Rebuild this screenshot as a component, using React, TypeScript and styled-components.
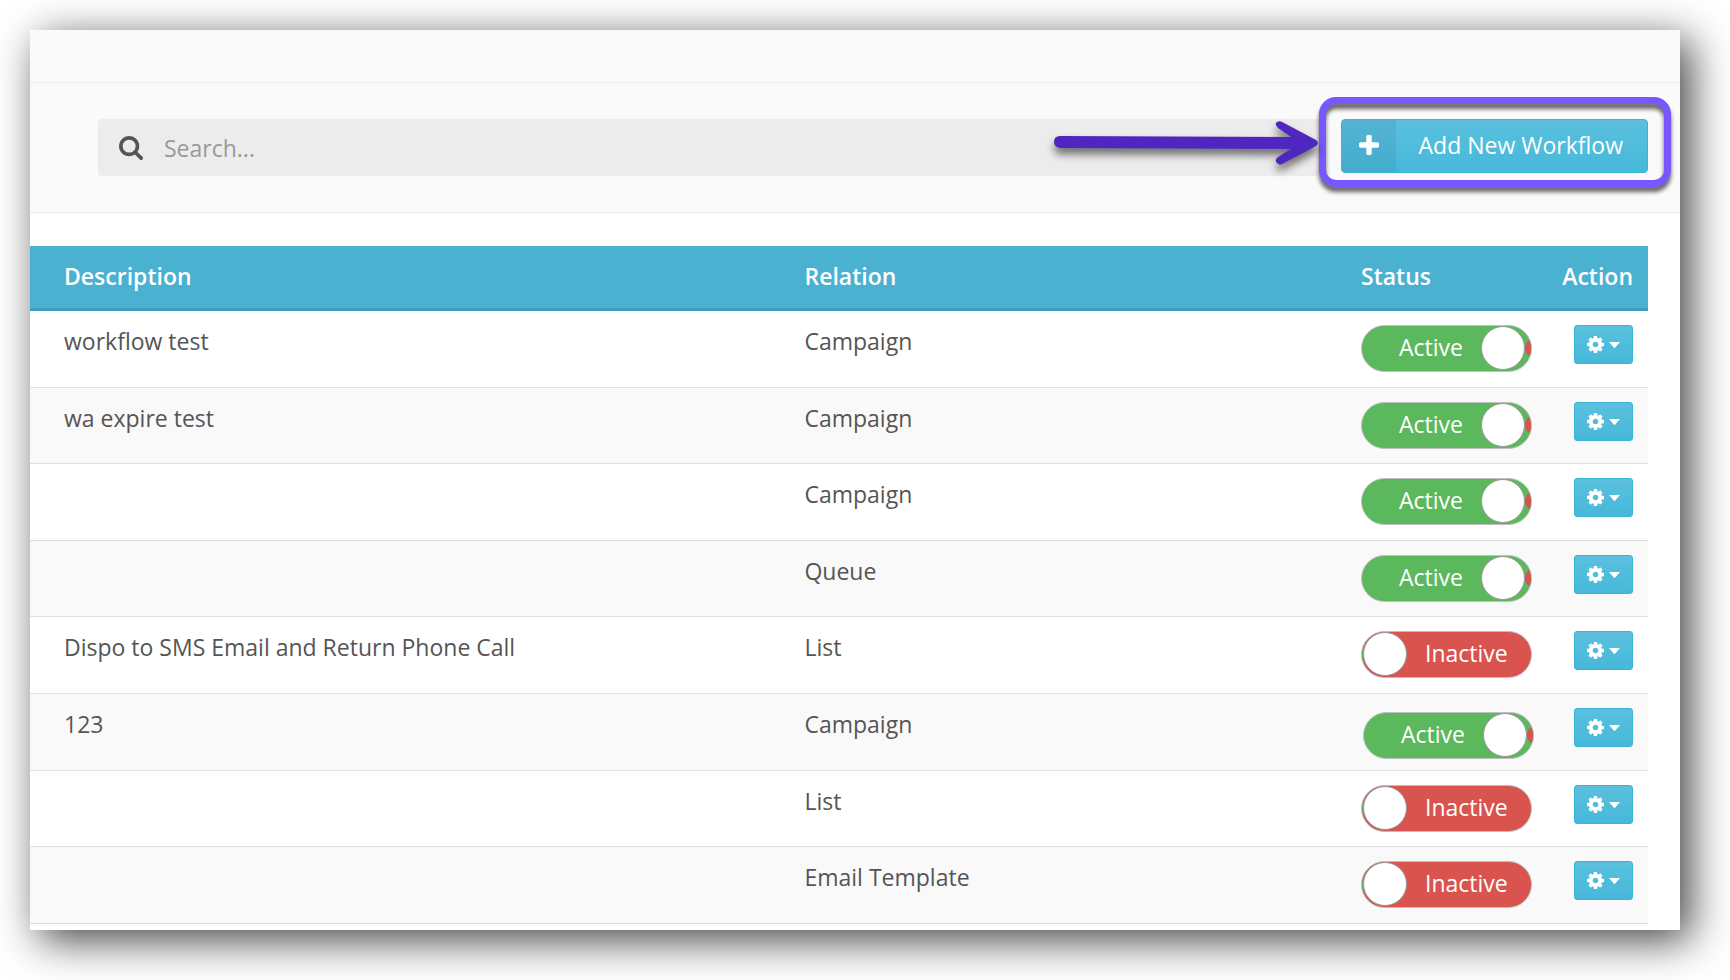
import React, { useState } from "react";
import styled, { createGlobalStyle } from "styled-components";

const GlobalStyle = createGlobalStyle`
  *, *::before, *::after { box-sizing: border-box; }
  body {
    margin: 0;
    background: #fff;
    color: #555;
    font-family: "Open Sans", "Noto Sans", sans-serif;
    font-size: 23px;
    line-height: 32px;
  }
  input, button { font: inherit; }
`;

const Card = styled.main`
  margin: 30px 50px 50px 30px;
  padding-bottom: 6px;
  background: #fff;
  box-shadow: 10px 10px 40px rgba(0, 0, 0, 0.75);
`;

const TopStrip = styled.header`
  height: 53px;
  background: #fafafa;
  border-bottom: 1px solid #ececec;
`;

const Toolbar = styled.div`
  display: flex;
  align-items: flex-start;
  gap: 19px;
  padding: 36px 32px 36px 68px;
  background: #fafafa;
  border-bottom: 1px solid #ececec;
`;

const SearchBox = styled.label`
  display: flex;
  flex: 1;
  align-items: center;
  gap: 21px;
  height: 57px;
  padding-left: 21px;
  background: #ececec;
  border-radius: 4px;
  color: #555;
`;

const SearchInput = styled.input`
  flex: 1;
  min-width: 0;
  height: 57px;
  padding: 0;
  border: 0;
  outline: 0;
  background: transparent;
  color: #555;
  &::placeholder { color: #999; opacity: 1; }
`;

const AddWrap = styled.div`
  position: relative;
`;

const blueFill = `
  background: linear-gradient(#5bc0de, #46b8da);
  border: 1px solid #39b3d7;
  color: #fff;
  cursor: pointer;
`;

const AddButton = styled.button`
  ${blueFill}
  display: flex;
  align-items: stretch;
  height: 54px;
  padding: 0;
  border-radius: 4px;
  overflow: hidden;
`;

const AddIcon = styled.span`
  display: flex;
  align-items: center;
  justify-content: center;
  width: 54px;
  padding-bottom: 2px;
  background: rgba(60, 130, 160, 0.2);
`;

const AddText = styled.span`
  padding: 9px 24px 9px 23px;
`;

const Highlight = styled.div`
  position: absolute;
  inset: -22px -23px -14px -22px;
  border: 7px solid #7857ff;
  border-radius: 17px;
  filter: drop-shadow(0 5px 2px rgba(0, 0, 0, 0.6));
  pointer-events: none;
`;

const Arrow = styled.svg`
  position: absolute;
  right: 100%;
  top: -3px;
  margin-right: 15px;
  overflow: visible;
  filter: drop-shadow(0 6px 4px rgba(0, 0, 0, 0.55));
  pointer-events: none;
`;

const TableArea = styled.section`
  padding: 33px 32px 0 0;
`;

const Table = styled.table`
  width: 100%;
  table-layout: fixed;
  border-collapse: separate;
  border-spacing: 0;
`;

const HeadCell = styled.th<{ $width?: string; $right?: boolean }>`
  width: ${(p) => p.$width ?? "auto"};
  height: 65px;
  padding: 0 15px 2px 14px;
  background: #4bb1d1;
  border-bottom: 3px solid #3c9fc1;
  color: #fff;
  font-weight: 600;
  text-align: ${(p) => (p.$right ? "right" : "left")};
  &:first-child { padding-left: 34px; }
`;

const Row = styled.tr`
  height: 77px;
  &:nth-child(5n + 2), &:nth-child(5n + 4) { height: 76px; }
  &:nth-child(even) { background: #f9f9f9; }
`;

const Cell = styled.td<{ $right?: boolean }>`
  padding: 14px 15px 0 14px;
  border-bottom: 1px solid #e0e0e0;
  vertical-align: top;
  text-align: ${(p) => (p.$right ? "right" : "left")};
  &:first-child { padding-left: 34px; }
`;

const Switch = styled.label<{ $on: boolean; $nudged?: boolean }>`
  position: relative;
  display: flex;
  align-items: flex-start;
  justify-content: ${(p) => (p.$on ? "flex-end" : "flex-start")};
  gap: 18px;
  width: 171px;
  height: 47px;
  margin: ${(p) => (p.$nudged ? "4px 0 0 2px" : "0")};
  padding: ${(p) => (p.$on ? "0 6px 0 0" : "0 0 0 1px")};
  border: 1px solid #bfbfbf;
  border-radius: 24px;
  overflow: hidden;
  background: ${(p) => (p.$on ? "#5cb85c" : "#d9534f")};
  color: #fff;
  cursor: pointer;
`;

const SwitchText = styled.span`
  padding-top: 5px;
`;

const SwitchInput = styled.input`
  position: absolute;
  inset: 0;
  width: 100%;
  height: 100%;
  margin: 0;
  opacity: 0;
  cursor: pointer;
`;

const Knob = styled.span`
  width: 44px;
  height: 44px;
  border: 1px solid #999;
  border-radius: 50%;
  background: #fff;
`;

const OffEdge = styled.span`
  position: absolute;
  top: 14px;
  right: 0;
  width: 6px;
  height: 16px;
  border-radius: 6px 0 0 6px / 8px 0 0 8px;
  background: #d9534f;
`;

const OnEdge = styled.span`
  position: absolute;
  top: 17px;
  left: 0;
  width: 1px;
  height: 10px;
  background: #5cb85c;
`;

const ActionButton = styled.button`
  ${blueFill}
  display: inline-flex;
  align-items: center;
  justify-content: center;
  gap: 5px;
  width: 59px;
  height: 39px;
  padding: 0;
  border-radius: 3px;
  vertical-align: top;
`;

const SearchIcon = () => (
  <svg width="24" height="24" viewBox="0 128 1664 1664" fill="currentColor" aria-hidden="true">
    <path d="M1152 832q0-185-131.500-316.500t-316.500-131.500-316.500 131.500-131.500 316.500 131.500 316.500 316.500 131.500 316.500-131.500 131.500-316.500zm512 832q0 52-38 90t-90 38q-54 0-90-38l-343-342q-179 124-399 124-143 0-273.500-55.500t-225-150-150-225-55.500-273.500 55.500-273.500 150-225 225-150 273.500-55.500 273.500 55.500 225 150 150 225 55.500 273.500q0 220-124 399l343 343q37 37 37 90z" />
  </svg>
);

const PlusIcon = () => (
  <svg width="20" height="20" viewBox="0 128 1408 1408" fill="currentColor" aria-hidden="true">
    <path d="M1408 736v192q0 40-28 68t-68 28h-416v416q0 40-28 68t-68 28h-192q-40 0-68-28t-28-68v-416h-416q-40 0-68-28t-28-68v-192q0-40 28-68t68-28h416v-416q0-40 28-68t68-28h192q40 0 68 28t28 68v416h416q40 0 68 28t28 68z" />
  </svg>
);

const CogIcon = () => (
  <svg width="17" height="17" viewBox="0 128 1536 1536" fill="currentColor" aria-hidden="true">
    <path d="M1024 896q0-106-75-181t-181-75-181 75-75 181 75 181 181 75 181-75 75-181zm512-109v222q0 12-8 23t-20 13l-185 28q-19 54-39 91 35 50 107 138 10 12 10 25t-9 23q-27 37-99 108t-94 71q-12 0-26-9l-138-108q-44 23-91 38-16 136-29 186-7 28-36 28h-222q-14 0-24.500-8.500t-11.500-21.500l-28-184q-49-16-90-37l-141 107q-10 9-25 9-14 0-25-11-126-114-165-168-7-10-7-23 0-12 8-23 15-21 51-66.500t54-70.500q-27-50-41-99l-183-27q-13-2-21-12.500t-8-23.500v-222q0-12 8-23t19-13l186-28q14-46 39-92-40-57-107-138-10-12-10-24 0-10 9-23 26-36 98.500-107.500t94.500-71.500q13 0 26 10l138 107q44-23 91-38 16-136 29-186 7-28 36-28h222q14 0 24.500 8.500t11.500 21.500l28 184q49 16 90 37l142-107q9-9 24-9 13 0 25 10 129 119 165 170 7 8 7 22 0 12-8 23-15 21-51 66.500t-54 70.500q26 50 41 98l183 28q13 2 21 12.500t8 23.500z" />
  </svg>
);

const CaretIcon = () => (
  <svg width="11" height="6" viewBox="0 0 11 6" fill="currentColor" aria-hidden="true">
    <path d="M0 0h11L6 5.700q-0.500 0.500-1 0z" />
  </svg>
);

type Workflow = {
  id: number;
  description: string;
  relation: string;
  active: boolean;
  nudged?: boolean;
};

const workflows: Workflow[] = [
  { id: 1, description: "workflow test", relation: "Campaign", active: true },
  { id: 2, description: "wa expire test", relation: "Campaign", active: true },
  { id: 3, description: "", relation: "Campaign", active: true },
  { id: 4, description: "", relation: "Queue", active: true },
  { id: 5, description: "Dispo to SMS Email and Return Phone Call", relation: "List", active: false },
  { id: 6, description: "123", relation: "Campaign", active: true, nudged: true },
  { id: 7, description: "", relation: "List", active: false },
  { id: 8, description: "", relation: "Email Template", active: false },
];

function StatusSwitch({ initial, nudged }: { initial: boolean; nudged?: boolean }) {
  const [on, setOn] = useState(initial);
  return (
    <Switch $on={on} $nudged={nudged}>
      {on ? (
        <>
          <SwitchText>Active</SwitchText>
          <OffEdge />
          <Knob />
        </>
      ) : (
        <>
          <OnEdge />
          <Knob />
          <SwitchText>Inactive</SwitchText>
        </>
      )}
      <SwitchInput type="checkbox" checked={on} onChange={(e) => setOn(e.target.checked)} />
    </Switch>
  );
}

export default function App() {
  return (
    <>
      <GlobalStyle />
      <Card>
        <TopStrip />
        <Toolbar>
          <SearchBox>
            <SearchIcon />
            <SearchInput type="text" placeholder="Search..." aria-label="Search" />
          </SearchBox>
          <AddWrap>
            <AddButton type="button">
              <AddIcon>
                <PlusIcon />
              </AddIcon>
              <AddText>Add New Workflow</AddText>
            </AddButton>
            <Highlight />
            <Arrow width="272" height="60" viewBox="1054 116 272 60" aria-hidden="true">
              <path
                d="M1060 136L1291 137L1278 128Q1274 124 1277 122Q1280 120 1284 123L1316 140Q1320 143 1316 146L1284 163Q1280 166 1277 163Q1274 160 1278 157L1291 149L1060 148Q1054 147 1054 142Q1054 136 1060 136Z"
                fill="#5026c0"
              />
            </Arrow>
          </AddWrap>
        </Toolbar>
        <TableArea>
          <Table>
            <thead>
              <tr>
                <HeadCell $width="47%">Description</HeadCell>
                <HeadCell>Relation</HeadCell>
                <HeadCell $width="200px">Status</HeadCell>
                <HeadCell $width="101px" $right>Action</HeadCell>
              </tr>
            </thead>
            <tbody>
              {workflows.map((w) => (
                <Row key={w.id}>
                  <Cell>{w.description}</Cell>
                  <Cell>{w.relation}</Cell>
                  <Cell>
                    <StatusSwitch initial={w.active} nudged={w.nudged} />
                  </Cell>
                  <Cell $right>
                    <ActionButton type="button" aria-label="Workflow actions">
                      <CogIcon />
                      <CaretIcon />
                    </ActionButton>
                  </Cell>
                </Row>
              ))}
            </tbody>
          </Table>
        </TableArea>
      </Card>
    </>
  );
}
